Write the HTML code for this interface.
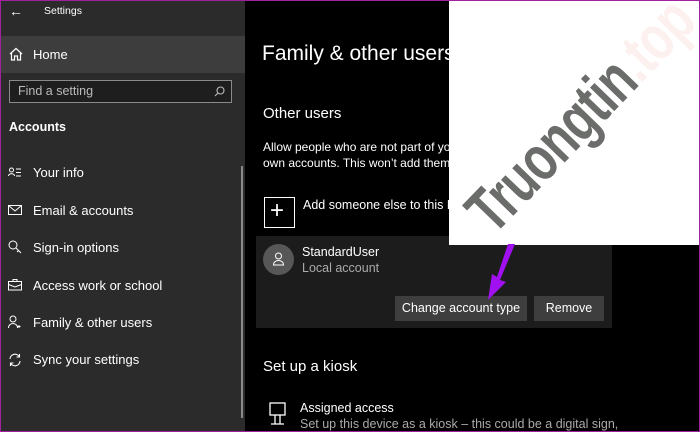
<!DOCTYPE html><html><head><style>
*{margin:0;padding:0;box-sizing:border-box}
body{width:700px;height:432px;overflow:hidden;background:#000;font-family:"Liberation Sans",sans-serif;position:relative;color:#fff}
.frame{position:absolute;inset:0;border:1px solid #a020a0;pointer-events:none;z-index:20}
.side{position:absolute;left:0;top:0;width:245px;height:432px;background:#2b2b2b}
.t{position:absolute;font-size:12.5px;color:#fff;white-space:nowrap}
.home{position:absolute;left:0;top:36px;width:245px;height:37px;background:#3d3d3d}
.search{position:absolute;left:9px;top:80px;width:223px;height:23px;border:1px solid #8a8a8a;background:#1e1e1e}
.scroll{position:absolute;left:241px;top:166px;width:2px;height:252px;background:#8a8a8a}
.card{position:absolute;left:256px;top:236px;width:356px;height:92px;background:#1c1c1c}
.btn{position:absolute;top:296px;height:25px;background:#3e3e3e;font-size:12.5px;text-align:center;line-height:25px}
.wm{position:absolute;left:449px;top:0;width:251px;height:245px;background:#fff;overflow:hidden;z-index:5}
</style></head><body>
<div class="side">
<div class="t" style="left:9px;top:3px;font-size:14px">←</div>
<div class="t" style="left:44px;top:5px;font-size:10.5px">Settings</div>
<div class="home"></div>
<svg style="position:absolute;left:9px;top:47px" width="14" height="14" viewBox="0 0 14 14" fill="none" stroke="#fff" stroke-width="1.2"><path d="M1 7L7 1.5L13 7M2.5 5.8V13H5.5V9H8.5V13H11.5V5.8"/></svg>
<div class="t" style="left:33px;top:47px;font-size:13px">Home</div>
<div class="search"><div class="t" style="left:8px;top:3px;color:#bbb;font-size:12.5px">Find a setting</div>
<svg style="position:absolute;right:6px;top:5px" width="11" height="11" viewBox="0 0 11 11" fill="none" stroke="#bbb" stroke-width="1.1"><circle cx="6.5" cy="4.5" r="3.5"/><path d="M4 7L1 10"/></svg></div>
<div class="t" style="left:9px;top:120px;font-weight:bold;font-size:12.5px">Accounts</div>
<div class="scroll"></div>
<svg style="position:absolute;left:8px;top:166px" width="14" height="14" viewBox="0 0 14 14" fill="none" stroke="#fff" stroke-width="1"><circle cx="3.5" cy="4" r="2"/><path d="M0.5 10c0-3 6-3 6 0M8 3h5M8 6.5h5M8 10h5"/></svg>
<div class="t" style="left:33px;top:165px;font-size:13px">Your info</div>
<svg style="position:absolute;left:8px;top:205px" width="14" height="11" viewBox="0 0 14 11" fill="none" stroke="#fff" stroke-width="1"><rect x="0.5" y="0.5" width="13" height="9"/><path d="M0.5 0.5L7 6L13.5 0.5"/></svg>
<div class="t" style="left:33px;top:203px;font-size:13px">Email &amp; accounts</div>
<svg style="position:absolute;left:8px;top:240px" width="14" height="15" viewBox="0 0 14 15" fill="none" stroke="#fff" stroke-width="1"><circle cx="5" cy="5" r="4"/><path d="M8 8L13 13M10.5 10.5L9 12"/></svg>
<div class="t" style="left:33px;top:240px;font-size:13px">Sign-in options</div>
<svg style="position:absolute;left:8px;top:279px" width="14" height="12" viewBox="0 0 14 12" fill="none" stroke="#fff" stroke-width="1"><rect x="0.5" y="2.5" width="13" height="8.5"/><path d="M5 2.5V0.5H9V2.5M0.5 5.5L7 8L13.5 5.5"/></svg>
<div class="t" style="left:33px;top:278px;font-size:13px">Access work or school</div>
<svg style="position:absolute;left:8px;top:315px" width="14" height="14" viewBox="0 0 14 14" fill="none" stroke="#fff" stroke-width="1"><circle cx="5" cy="4" r="3"/><path d="M0.5 13c0-6 9-6 9 0M11 10v3M9.5 11.5h3"/></svg>
<div class="t" style="left:33px;top:315px;font-size:13px">Family &amp; other users</div>
<svg style="position:absolute;left:8px;top:353px" width="14" height="14" viewBox="0 0 14 14" fill="none" stroke="#fff" stroke-width="1.1"><path d="M2 6A5 5 0 0 1 11.5 4M12 8A5 5 0 0 1 2.5 10M11.5 1V4H8.5M2.5 13V10H5.5"/></svg>
<div class="t" style="left:33px;top:352px;font-size:13px">Sync your settings</div>
</div>
<div class="t" style="left:262px;top:42px;font-size:21px;font-weight:300">Family &amp; other users</div>
<div class="t" style="left:263px;top:105px;font-size:15px">Other users</div>
<div class="t" style="left:263px;top:140px;font-size:12px">Allow people who are not part of your family to sign in with their</div>
<div class="t" style="left:263px;top:156px;font-size:12px">own accounts. This won’t add them to your family.</div>
<div style="position:absolute;left:264px;top:197px;width:31px;height:31px;border:1px solid #fff"></div>
<div class="t" style="left:270px;top:197px;font-size:24px;font-weight:300">+</div>
<div class="t" style="left:303px;top:198px;font-size:12.5px">Add someone else to this PC</div>
<div class="card"></div>
<div style="position:absolute;left:263px;top:244px;width:31px;height:31px;border-radius:50%;background:#575757"></div>
<svg style="position:absolute;left:272px;top:252px" width="13" height="14" viewBox="0 0 13 14" fill="none" stroke="#fff" stroke-width="1"><circle cx="6.5" cy="4" r="3"/><path d="M1.5 13c0-6 10-6 10 0z"/></svg>
<div class="t" style="left:302px;top:245px">StandardUser</div>
<div class="t" style="left:302px;top:261px;color:#aaa">Local account</div>
<div class="btn" style="left:395px;width:132px">Change account type</div>
<div class="btn" style="left:534px;width:70px">Remove</div>
<div class="t" style="left:263px;top:358px;font-size:15px">Set up a kiosk</div>
<svg style="position:absolute;left:268px;top:402px" width="20" height="24" viewBox="0 0 20 24" fill="none" stroke="#fff" stroke-width="1.3"><rect x="2" y="1" width="15" height="12"/><path d="M7 13v9M12 13v9M3 22h13"/></svg>
<div class="t" style="left:300px;top:401px">Assigned access</div>
<div class="t" style="left:300px;top:417px;color:#aaa">Set up this device as a kiosk – this could be a digital sign,</div>
<div class="wm">
<div style="position:absolute;left:-79px;top:80px;width:420px;height:70px;line-height:70px;text-align:center;transform:rotate(-46deg) scaleX(0.74);font:bold 64px/70px 'Liberation Sans',sans-serif;color:#6b6d6b;letter-spacing:-1px">Truongtin<span style="color:#fdf1ef">.top</span></div>
</div>
<svg style="position:absolute;left:480px;top:244px;z-index:6" width="40" height="60" viewBox="0 0 40 60"><path d="M35 0L20 36L26 38L8 56L12 30L17 33L28 0Z" fill="#a010f0"/></svg>
<div class="frame"></div>
</body></html>
